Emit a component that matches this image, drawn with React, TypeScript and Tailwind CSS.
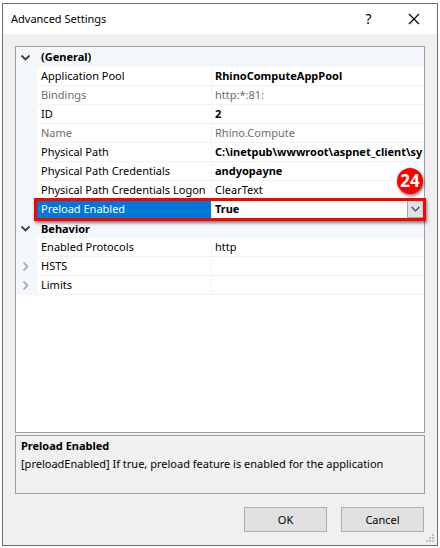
import { useState } from "react";

type Property = {
  name: string;
  value?: string;
  bold?: boolean;
  readOnly?: boolean;
  expandable?: boolean;
  selected?: boolean;
};

const groups: { title: string; rows: Property[] }[] = [
  {
    title: "(General)",
    rows: [
      { name: "Application Pool", value: "RhinoComputeAppPool", bold: true },
      { name: "Bindings", value: "http:*:81:", readOnly: true },
      { name: "ID", value: "2", bold: true },
      { name: "Name", value: "Rhino.Compute", readOnly: true },
      { name: "Physical Path", value: "C:\\inetpub\\wwwroot\\aspnet_client\\sy", bold: true },
      { name: "Physical Path Credentials", value: "andyopayne", bold: true },
      { name: "Physical Path Credentials Logon", value: "ClearText" },
      { name: "Preload Enabled", value: "True", bold: true, selected: true },
    ],
  },
  {
    title: "Behavior",
    rows: [
      { name: "Enabled Protocols", value: "http" },
      { name: "HSTS", expandable: true },
      { name: "Limits", expandable: true },
    ],
  },
];

function Chevron({ open }: { open: boolean }) {
  return open ? (
    <svg width="11" height="11" viewBox="0 0 11 11" fill="none" stroke="#404040" strokeWidth="1.8" aria-hidden="true">
      <path d="M1.5 3.5 5.5 7.5 9.5 3.5" />
    </svg>
  ) : (
    <svg width="11" height="11" viewBox="0 0 11 11" fill="none" stroke="#a6a6a6" strokeWidth="1.7" aria-hidden="true">
      <path d="M3.5 1.5 7.5 5.5 3.5 9.5" />
    </svg>
  );
}

function PropertyRow({ row }: { row: Property }) {
  const [preload, setPreload] = useState("True");
  const tone = row.readOnly ? "text-[#6d6d6d]" : "text-black";
  return (
    <tr className={row.selected ? "relative h-[19px]" : "h-[19px]"}>
      <td className="bg-[#f4f7fc] p-0">
        {row.expandable && (
          <button type="button" aria-label={`Expand ${row.name}`} className="ml-1 flex">
            <Chevron open={false} />
          </button>
        )}
      </td>
      <th
        scope="row"
        className={`border-r border-b border-[#f0f3f9] p-0 pl-1 text-left font-normal whitespace-nowrap ${
          row.selected ? "bg-[#0078d7] text-white" : tone
        }`}
      >
        {row.name}
      </th>
      <td
        className={`border-b border-[#f0f3f9] p-0 pl-[3px] whitespace-nowrap ${tone} ${
          row.bold ? "font-bold" : ""
        } ${row.selected ? "" : "overflow-hidden"}`}
      >
        {row.selected ? (
          <div className="flex h-[18px]">
            <select
              aria-label={row.name}
              value={preload}
              onChange={(e) => setPreload(e.target.value)}
              className="min-w-0 flex-1 appearance-none bg-white font-bold outline-none"
            >
              <option>True</option>
              <option>False</option>
            </select>
            <span className="flex w-[17px] items-center justify-center border border-[#a6a6a6] bg-[#e1e1e1]">
              <svg width="9" height="6" viewBox="0 0 9 6" fill="none" stroke="#444" strokeWidth="1.2" aria-hidden="true">
                <path d="M.7 1 4.5 4.8 8.3 1" />
              </svg>
            </span>
            <span className="pointer-events-none absolute -top-[2px] -right-[2px] -bottom-[2px] left-[18px] border-3 border-[#fe0000] shadow-[1px_2px_3px_rgba(0,0,0,0.5)]" />
            <span className="absolute -top-8 right-[1px] flex size-[26px] items-center justify-center rounded-full bg-[#fe0000] text-[17px] leading-5 text-white shadow-[1px_2px_3px_rgba(0,0,0,0.5)]">
              24
            </span>
          </div>
        ) : (
          row.value
        )}
      </td>
    </tr>
  );
}

export default function App() {
  return (
    <div className="flex min-h-screen flex-col bg-white px-[2px] pt-[3px] pb-[2px] font-['Noto_Sans',sans-serif] text-[11px] leading-4 text-black">
      <main className="relative flex flex-1 flex-col border border-[#6e6e6e] bg-[#f0f0f0]">
        <header className="flex h-[30px] shrink-0 items-center bg-white pl-2">
          <h1 className="flex-1">Advanced Settings</h1>
          <button type="button" aria-label="Help" className="flex w-[45px] justify-center text-[14px]">
            ?
          </button>
          <button type="button" aria-label="Close" className="flex w-[46px] justify-center">
            <svg width="12" height="12" viewBox="0 0 12 12" fill="none" stroke="#000" strokeWidth="1.2" aria-hidden="true">
              <path d="M1 1 11 11M11 1 1 11" />
            </svg>
          </button>
        </header>

        <div className="flex flex-1 flex-col px-3 pt-3 pb-[13px]">
          <section className="flex-1 border border-[#a0a0a0] bg-white">
            <table className="w-full table-fixed border-separate border-spacing-0">
              <colgroup>
                <col className="w-[21px]" />
                <col className="w-[175px]" />
                <col />
              </colgroup>
              {groups.map((group, i) => (
                <tbody key={group.title}>
                  <tr className={i === 0 ? "h-5" : "h-[19px]"}>
                    <td className="bg-[#f4f7fc] p-0">
                      <button type="button" aria-label={`Collapse ${group.title}`} className="ml-1 flex">
                        <Chevron open />
                      </button>
                    </td>
                    <th scope="colgroup" colSpan={2} className="bg-[#f4f7fc] p-0 pl-1 text-left font-bold">
                      {group.title}
                    </th>
                  </tr>
                  {group.rows.map((row) => (
                    <PropertyRow key={row.name} row={row} />
                  ))}
                </tbody>
              ))}
            </table>
          </section>

          <section className="mt-[2px] h-[59px] shrink-0 border border-[#a0a0a0] px-[5px] pt-[2px]">
            <h2 className="font-bold">Preload Enabled</h2>
            <p className="mt-[2px]">[preloadEnabled] If true, preload feature is enabled for the application</p>
          </section>

          <footer className="mt-[13px] flex shrink-0 justify-end gap-[14px] pr-px">
            <button type="button" className="h-[25px] w-[83px] border border-[#adadad] bg-[#e1e1e1]">
              OK
            </button>
            <button type="button" className="h-[25px] w-[83px] border border-[#adadad] bg-[#e1e1e1]">
              Cancel
            </button>
          </footer>
        </div>
        <svg className="absolute right-[2px] bottom-[2px]" width="10" height="10" viewBox="0 0 10 10" fill="#bfbfbf" aria-hidden="true">
          <path d="M7 1h2v2h-2zM4 4h2v2h-2zM7 4h2v2h-2zM1 7h2v2h-2zM4 7h2v2h-2zM7 7h2v2h-2z" />
        </svg>
      </main>
    </div>
  );
}
